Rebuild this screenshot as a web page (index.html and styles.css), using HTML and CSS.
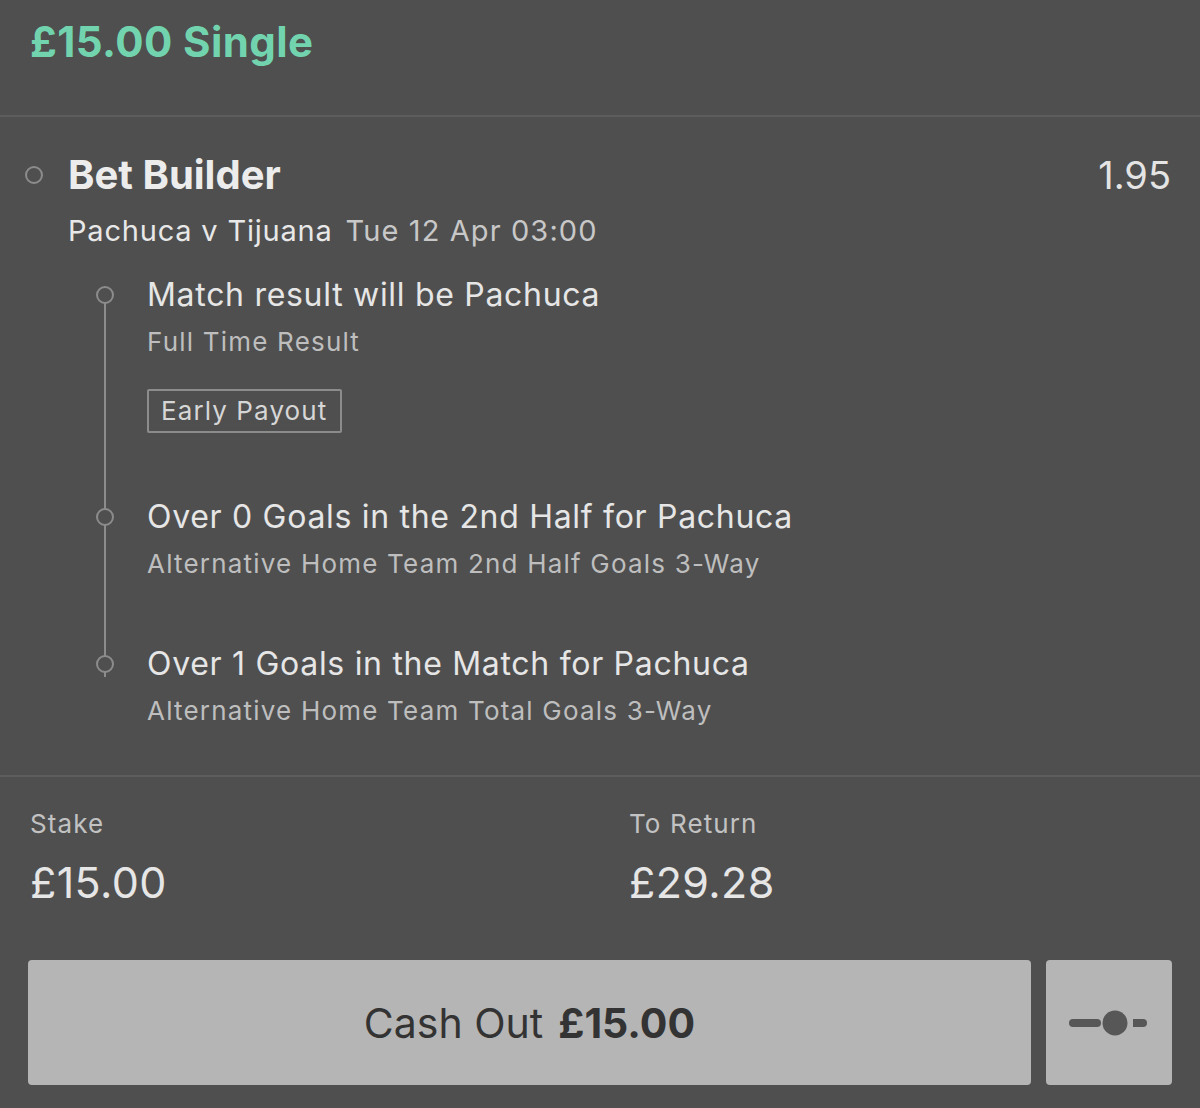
FILE: index.html
```html
<!DOCTYPE html>
<html>
<head>
<meta charset="utf-8">
<link rel="stylesheet" href="styles.css">
</head>
<body>
<div class="page">
  <header class="head">
    <h1 class="head-title">£15.00 Single</h1>
  </header>
  <section class="bet">
    <div class="bet-row">
      <span class="dot dot-main"></span>
      <h2 class="bet-name">Bet Builder</h2>
      <span class="odds">1.95</span>
    </div>
    <div class="event">
      <span class="event-name">Pachuca v Tijuana</span>
      <span class="event-time">Tue 12 Apr 03:00</span>
    </div>
    <div class="legs">
      <div class="leg">
        <span class="dot dot-leg"></span>
        <div class="leg-title">Match result will be Pachuca</div>
        <div class="leg-sub">Full Time Result</div>
        <div class="badge">Early Payout</div>
      </div>
      <div class="leg">
        <span class="dot dot-leg"></span>
        <div class="leg-title">Over 0 Goals in the 2nd Half for Pachuca</div>
        <div class="leg-sub">Alternative Home Team 2nd Half Goals 3-Way</div>
      </div>
      <div class="leg">
        <span class="dot dot-leg"></span>
        <div class="leg-title">Over 1 Goals in the Match for Pachuca</div>
        <div class="leg-sub">Alternative Home Team Total Goals 3-Way</div>
      </div>
    </div>
  </section>
  <section class="totals">
    <div class="total">
      <div class="total-label">Stake</div>
      <div class="total-value">£15.00</div>
    </div>
    <div class="total">
      <div class="total-label">To Return</div>
      <div class="total-value">£29.28</div>
    </div>
  </section>
  <div class="actions">
    <button class="cashout">Cash Out <b>£15.00</b></button>
    <button class="slider" aria-label="Partial cash out">
      <svg width="80" height="30" viewBox="0 0 80 30">
        <line x1="4" y1="15" x2="28" y2="15" stroke="#575757" stroke-width="8" stroke-linecap="round"/>
        <circle cx="46" cy="15" r="12.5" fill="#575757"/>
        <path d="M64 11 H74 a4 4 0 0 1 0 8 H64 Z" fill="#575757"/>
      </svg>
    </button>
  </div>
</div>
</body>
</html>
```

FILE: styles.css
```css
* { box-sizing: border-box; }
html, body {
  margin: 0;
  padding: 0;
  background: #4f4f4f;
}
body {
  font-family: Inter, "Open Sans", "Liberation Sans", sans-serif;
  color: #e4e4e4;
  height: 1108px;
  overflow: hidden;
}
.head {
  height: 117px;
  padding: 17px 30px 0;
  border-bottom: 2px solid #5d5d5d;
}
.head-title {
  margin: 0;
  font-size: 42px;
  line-height: 50px;
  font-weight: 700;
  color: #72d4ae;
  letter-spacing: 0.4px;
}
.bet {
  padding: 35px 29px 48px 68px;
  border-bottom: 2px solid #5d5d5d;
}
.bet-row {
  position: relative;
  display: flex;
  align-items: center;
  justify-content: space-between;
  height: 46px;
}
.dot {
  position: absolute;
  width: 18px;
  height: 18px;
  border: 2px solid #8c8c8c;
  border-radius: 50%;
  background: #4f4f4f;
}
.dot-main {
  left: -43px;
  top: 14px;
}
.bet-name {
  margin: 0;
  font-size: 40px;
  font-weight: 700;
  line-height: 46px;
  color: #ececec;
}
.odds {
  font-size: 38px;
  line-height: 46px;
  font-weight: 400;
  color: #e4e4e4;
}
.event {
  margin-top: 15px;
  font-size: 29px;
  line-height: 36px;
  letter-spacing: 0.8px;
}
.event-name { color: #e8e8e8; margin-right: 4px; }
.event-time { color: #c8c8c8; letter-spacing: 1.1px; }
.legs {
  position: relative;
  margin-top: 27px;
  padding-left: 79px;
  display: flex;
  flex-direction: column;
  gap: 65px;
}
.legs::before {
  content: "";
  position: absolute;
  left: 36px;
  top: 19px;
  bottom: 50px;
  width: 2px;
  background: #8c8c8c;
}
.leg {
  position: relative;
}
.dot-leg {
  left: -51px;
  top: 10px;
}
.leg-title {
  font-size: 32px;
  line-height: 38px;
  letter-spacing: 0.7px;
  color: #e6e6e6;
}
.leg-sub {
  margin-top: 12px;
  font-size: 26px;
  line-height: 32px;
  letter-spacing: 1.2px;
  color: #bebebe;
}
.badge {
  display: inline-block;
  margin-top: 31px;
  height: 44px;
  padding: 0 13px 0 12px;
  border: 2px solid #8c8c8c;
  border-radius: 2px;
  font-size: 26px;
  line-height: 40px;
  letter-spacing: 1.1px;
  color: #d6d6d6;
}
.totals {
  display: grid;
  grid-template-columns: 599px 1fr;
  padding: 31px 30px 0;
}
.total-label {
  font-size: 26px;
  line-height: 32px;
  letter-spacing: 1.1px;
  color: #c2c2c2;
}
.total-value {
  margin-top: 17px;
  font-size: 43px;
  line-height: 50px;
  font-weight: 400;
  letter-spacing: 0.4px;
  color: #e6e6e6;
}
.actions {
  display: flex;
  gap: 15px;
  padding: 53px 28px 0;
}
.cashout, .slider {
  height: 125px;
  border: 0;
  border-radius: 4px;
  background: #b5b5b5;
  color: #333333;
  font-family: inherit;
  display: flex;
  align-items: center;
  justify-content: center;
}
.cashout {
  flex: 1;
  font-size: 41px;
  font-weight: 400;
  gap: 15px;
}
.cashout b { font-weight: 700; }
.slider {
  width: 126px;
  padding: 0;
}
```
